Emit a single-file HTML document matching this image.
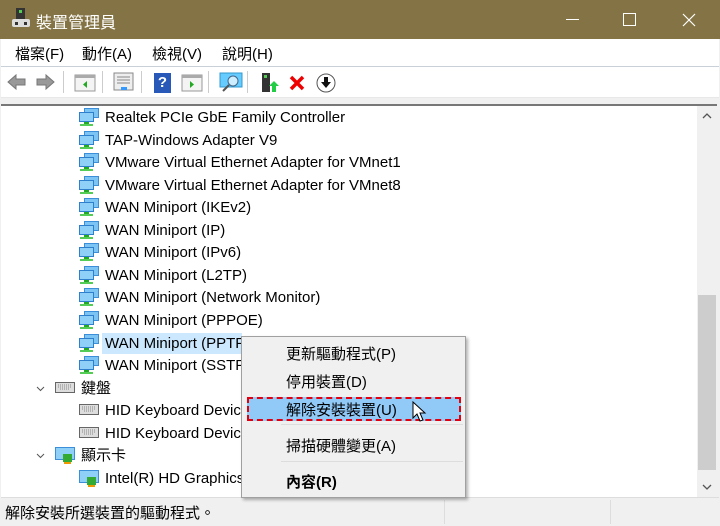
<!DOCTYPE html>
<html><head><meta charset="utf-8"><style>
*{margin:0;padding:0;box-sizing:border-box}
body{width:720px;height:526px;position:relative;background:#f0f0f0;font-family:"Liberation Sans","Noto Sans CJK TC",sans-serif;overflow:hidden;color:#000}
.abs{position:absolute}
#title{left:0;top:0;width:720px;height:39px;background:#847445;color:#fff;font-size:16px}
#menu{left:1px;top:39px;width:718px;height:27px;background:#fff;font-size:15px}
#menu span{position:absolute;top:4px}
#tb{left:1px;top:66px;width:718px;height:32px;background:#fff;border-top:1px solid #c9d0d8;border-bottom:1px solid #e8e8e8}
#tree{left:1px;top:104px;width:716px;height:393px;background:#fff;border-top:2px solid #777}
.row{position:absolute;font-size:15px;height:22px;line-height:22px;white-space:nowrap}
#sb{left:697px;top:106px;width:20px;height:391px;background:#f0f0f0}
#status{left:1px;top:497px;width:718px;height:28px;background:#f0f0f0;border-top:1px solid #ddd;font-size:15px}
#ctx{left:241px;top:336px;width:225px;height:162px;background:#f0f0f0;border:1px solid #a0a0a0;box-shadow:2px 2px 3px rgba(0,0,0,.3);font-size:15px}
#ctx div{position:absolute;left:44px}
</style></head><body>
<div id="title" class="abs">
 <svg class="abs" style="left:11px;top:7px" width="20" height="22"><rect x="5" y="1" width="9" height="12" fill="#333"/><rect x="8" y="3" width="3" height="3" fill="#5c5"/><rect x="1" y="12" width="18" height="8" rx="2" fill="#ddd"/><rect x="4" y="15" width="3" height="3" fill="#333"/><rect x="13" y="15" width="3" height="3" fill="#333"/></svg>
 <span class="abs" style="left:36px;top:9px">裝置管理員</span>
 <div class="abs" style="left:566px;top:19px;width:13px;height:1px;background:#fff"></div>
 <div class="abs" style="left:623px;top:13px;width:13px;height:13px;border:1px solid #fff"></div>
 <svg class="abs" style="left:682px;top:13px" width="14" height="14"><path d="M1 1L13 13M13 1L1 13" stroke="#fff" stroke-width="1.2"/></svg>
</div>
<div id="menu" class="abs"><span style="left:14px">檔案(F)</span><span style="left:81px">動作(A)</span><span style="left:151px">檢視(V)</span><span style="left:221px">說明(H)</span></div>
<div id="tb" class="abs">
 <svg class="abs" style="left:5px;top:5px" width="50" height="20"><path d="M2 10L10 3V7H19V13H10V17Z" fill="#999" stroke="#777"/><path d="M48 10L40 3V7H31V13H40V17Z" fill="#999" stroke="#777"/></svg>
 <div class="abs" style="left:62px;top:4px;width:1px;height:22px;background:#ccc"></div>
 <svg class="abs" style="left:73px;top:7px" width="22" height="18"><rect x="1" y="1" width="20" height="16" fill="#f4f4f4" stroke="#999"/><rect x="1" y="1" width="20" height="3" fill="#aaa"/><path d="M13 7V14L9 10.5Z" fill="#2a2"/></svg>
 <div class="abs" style="left:101px;top:4px;width:1px;height:22px;background:#ccc"></div>
 <svg class="abs" style="left:112px;top:5px" width="22" height="20"><rect x="1" y="1" width="19" height="17" fill="#eee" stroke="#888"/><path d="M4 5h13M4 8h13M4 11h13" stroke="#888"/><rect x="8" y="15" width="6" height="3" fill="#39f"/></svg>
 <div class="abs" style="left:140px;top:4px;width:1px;height:22px;background:#ccc"></div>
 <div class="abs" style="left:153px;top:6px;width:17px;height:20px;background:#2859b8;color:#fff;font-size:15px;font-weight:bold;text-align:center;line-height:20px">?</div>
 <svg class="abs" style="left:180px;top:7px" width="22" height="18"><rect x="1" y="1" width="20" height="16" fill="#f4f4f4" stroke="#999"/><rect x="1" y="1" width="20" height="3" fill="#aaa"/><path d="M9 7V14L13 10.5Z" fill="#2a2"/></svg>
 <div class="abs" style="left:207px;top:4px;width:1px;height:22px;background:#ccc"></div>
 <svg class="abs" style="left:218px;top:5px" width="24" height="22"><rect x="1" y="1" width="22" height="14" fill="#6cf" stroke="#39c"/><circle cx="14" cy="9" r="5" fill="#cef" stroke="#468"/><path d="M10 13L4 19" stroke="#555" stroke-width="2"/></svg>
 <div class="abs" style="left:246px;top:4px;width:1px;height:22px;background:#ccc"></div>
 <svg class="abs" style="left:259px;top:5px" width="20" height="22"><rect x="2" y="1" width="8" height="19" fill="#333"/><rect x="4" y="3" width="3" height="3" fill="#5c5"/><path d="M14 9L19 14H16V20H12V14H9Z" fill="#2c4"/></svg>
 <svg class="abs" style="left:288px;top:8px" width="16" height="16"><path d="M2 2L14 14M14 2L2 14" stroke="#e00" stroke-width="3.5"/></svg>
 <svg class="abs" style="left:315px;top:6px" width="20" height="20"><circle cx="10" cy="10" r="9" fill="#fff" stroke="#555"/><path d="M8 4H12V9H15L10 15L5 9H8Z" fill="#111"/></svg>
</div>
<div id="tree" class="abs">
<svg width="0" height="0" style="position:absolute"><defs><g id="n"><rect x="5" y="0" width="15" height="10" fill="#3a8fd8"/><rect x="6" y="1" width="13" height="8" fill="#7cc4f4"/><rect x="0" y="4" width="15" height="10" fill="#2f80cc"/><rect x="1" y="5" width="13" height="8" fill="#8fd0f8"/><rect x="5" y="14" width="5" height="2" fill="#2a2"/><rect x="1" y="16" width="13" height="2" fill="#5c5"/></g><g id="k"><rect x="0" y="3" width="20" height="11" fill="#666"/><rect x="1" y="4" width="18" height="9" fill="#ddd"/><path d="M3 6h14M3 8h14M5 10h10" stroke="#888" stroke-dasharray="1 1"/></g></defs></svg>
</div>
<div id="rows"></div>
<div id="sb" class="abs">
 <svg class="abs" style="left:5px;top:7px" width="10" height="6"><path d="M1 5L5 1L9 5" stroke="#555" fill="none" stroke-width="1.3"/></svg>
 <div class="abs" style="left:1px;top:189px;width:18px;height:175px;background:#cdcdcd"></div>
 <svg class="abs" style="left:5px;top:378px" width="10" height="6"><path d="M1 1L5 5L9 1" stroke="#555" fill="none" stroke-width="1.3"/></svg>
</div>
<div id="status" class="abs"><span class="abs" style="left:4px;top:4px">解除安裝所選裝置的驅動程式。</span>
<div class="abs" style="left:443px;top:2px;width:1px;height:24px;background:#ddd"></div><div class="abs" style="left:609px;top:2px;width:1px;height:24px;background:#ddd"></div></div>
<div id="ctx" class="abs">
 <div style="top:6px">更新驅動程式(P)</div>
 <div style="top:34px">停用裝置(D)</div>
 <div style="left:5px;top:60px;width:214px;height:24px;background:#91c9f7;border:2px dashed #e00010"></div>
 <div style="top:62px">解除安裝裝置(U)</div>
 <div style="left:39px;top:87px;width:182px;height:1px;background:#ddd"></div>
 <div style="top:98px">掃描硬體變更(A)</div>
 <div style="left:39px;top:124px;width:182px;height:1px;background:#ddd"></div>
 <div style="top:134px;font-weight:bold">內容(R)</div>
 <svg style="position:absolute;left:170px;top:64px" width="16" height="22"><path d="M1 1V17L5 13L8 20L11 19L8 12H13Z" fill="#fff" stroke="#000"/></svg>
</div>
<script>
var items=[["n",79,105,"Realtek PCIe GbE Family Controller"],["n",79,105,"TAP-Windows Adapter V9"],["n",79,105,"VMware Virtual Ethernet Adapter for VMnet1"],["n",79,105,"VMware Virtual Ethernet Adapter for VMnet8"],["n",79,105,"WAN Miniport (IKEv2)"],["n",79,105,"WAN Miniport (IP)"],["n",79,105,"WAN Miniport (IPv6)"],["n",79,105,"WAN Miniport (L2TP)"],["n",79,105,"WAN Miniport (Network Monitor)"],["n",79,105,"WAN Miniport (PPPOE)"],["n",79,105,"WAN Miniport (PPTP)"],["n",79,105,"WAN Miniport (SSTP)"],["k",55,81,"鍵盤"],["k",79,105,"HID Keyboard Device"],["k",79,105,"HID Keyboard Device"],["d",55,81,"顯示卡"],["d",79,105,"Intel(R) HD Graphics 520"]];
var h="";
items.forEach(function(it,i){var y=107+i*22.55;
if(i==10)h+='<div class="abs" style="left:102px;top:'+(y)+'px;width:140px;height:21px;background:#cce8ff"></div>';
var ic=it[0]=="d"?'<rect x="0" y="1" width="20" height="13" fill="#3a8fd8"/><rect x="1" y="2" width="18" height="11" fill="#8fd0f8"/><rect x="8" y="8" width="9" height="8" fill="#3a3"/><rect x="9" y="16" width="7" height="2" fill="#e90"/>':'<use href="#'+it[0]+'"/>';
h+='<svg class="abs" style="left:'+it[1]+'px;top:'+(y+1)+'px" width="21" height="19">'+ic+'</svg>';
if(it[1]==55)h+='<svg class="abs" style="left:36px;top:'+(y+8)+'px" width="9" height="6"><path d="M1 1L4.5 4.5L8 1" stroke="#555" fill="none"/></svg>';
h+='<div class="row" style="left:'+it[2]+'px;top:'+y+'px">'+it[3]+'</div>';});
document.getElementById("rows").innerHTML=h;
</script>
</body></html>
